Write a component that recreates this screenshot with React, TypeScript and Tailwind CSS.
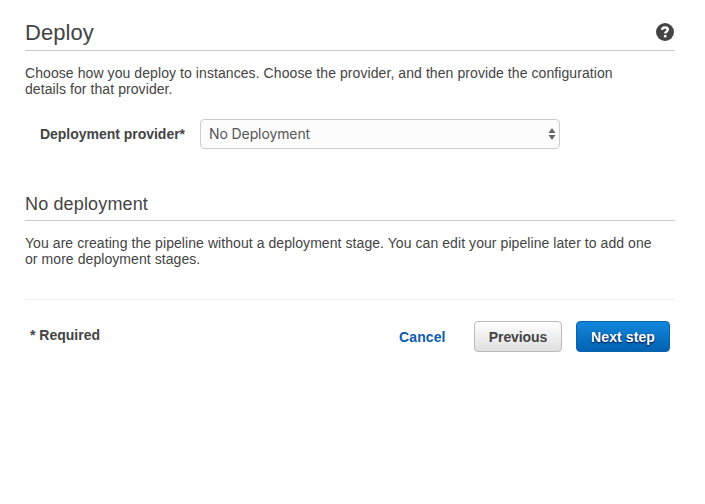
function Help() {
  return (
    <svg width="18" height="18" viewBox="0 0 18 18" className="block">
      <circle cx="9" cy="9" r="9" fill="#444" />
      <path d="M6 6.9C6.2 5.2 7.3 4.5 9 4.5c1.7 0 2.8.7 2.8 2.1 0 1.8-2.6 1.9-2.6 3.9" fill="none" stroke="#fff" strokeWidth="2.4" />
      <rect x="7.9" y="12" width="2.6" height="2.4" fill="#fff" />
    </svg>
  );
}

function Arrows() {
  return (
    <svg width="8" height="14" viewBox="0 0 8 14" className="block" fill="#666">
      <path d="M4 1l3.5 5h-7z" />
      <path d="M4 13L.5 8h7z" />
    </svg>
  );
}

export default function App() {
  return (
    <main className="h-[504px] w-[705px] overflow-hidden bg-white pr-[30px] pl-[25px] font-['Liberation_Sans',Arial,sans-serif] text-[14px] leading-4 text-[#444]">
      <header className="flex h-[51px] items-start justify-between border-b border-[#ccc] pt-[20px]">
        <h1 className="text-[22px] leading-[25px] tracking-[0.05px]">Deploy</h1>
        <button type="button" aria-label="Help" className="mt-[3px] mr-px"><Help /></button>
      </header>
      <p className="mt-[14px] tracking-[0.078px] whitespace-nowrap">
        Choose how you deploy to instances. Choose the provider, and then provide the configuration<br />
        details for that provider.
      </p>
      <div className="mt-[22px] flex h-[30px] items-center">
        <label className="mr-[15px] w-[160px] text-right font-bold tracking-[-0.02px]">Deployment provider*</label>
        <div className="flex h-[30px] w-[360px] items-center justify-between rounded-[4px] border border-[#ccc] bg-[#fcfcfc] pr-[3px] pl-2 text-[#555]">
          <span className="font-[Inter,sans-serif] text-[14px] tracking-[-0.1px]">No Deployment</span>
          <Arrows />
        </div>
      </div>
      <h2 className="mt-[44px] h-[28px] border-b border-[#ccc] text-[18px] leading-[22px] tracking-[0.15px]">No deployment</h2>
      <p className="mt-[14px] tracking-[0.068px] whitespace-nowrap">
        You are creating the pipeline without a deployment stage. You can edit your pipeline later to add one<br />
        or more deployment stages.
      </p>
      <footer className="mt-[32px] flex items-start justify-between border-t border-[#eee] px-[5px] pt-[21px] font-bold">
        <span className="mt-[6px]">* Required</span>
        <div className="flex h-[31px] items-center">
          <a href="#" className="mr-[28px] w-[47px] whitespace-nowrap text-[#0b5cb3] tracking-[0.12px]">Cancel</a>
          <button type="button" className="mr-[14px] h-[31px] w-[88px] rounded-[4px] border border-[#bbb] bg-linear-to-b from-white to-[#dfdfdf] pt-px tracking-[-0.1px]">Previous</button>
          <button type="button" className="h-[31px] w-[94px] rounded-[4px] border border-[#0a62ad] bg-linear-to-b from-[#1287dc] to-[#0362b2] pt-px tracking-[0.1px] text-white [text-shadow:0_1px_2px_#003]">Next step</button>
        </div>
      </footer>
    </main>
  );
}
